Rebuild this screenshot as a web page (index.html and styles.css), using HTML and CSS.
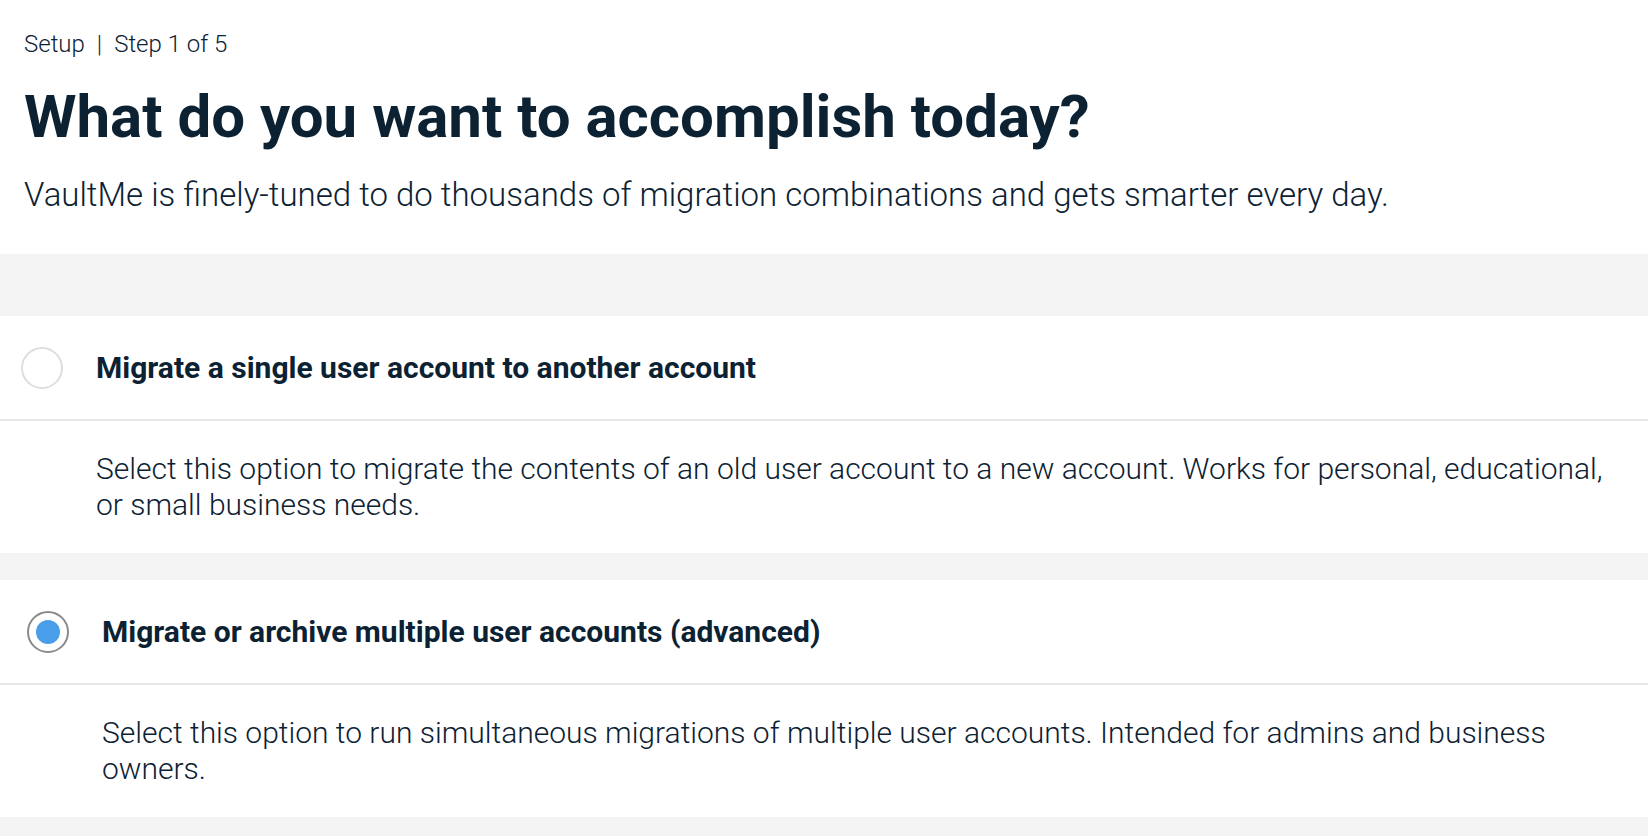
FILE: index.html
```html
<!DOCTYPE html>
<html lang="en">
<head>
<meta charset="utf-8">
<title>Setup - Step 1 of 5</title>
<link rel="stylesheet" href="styles.css">
</head>
<body>
  <header class="intro">
    <div class="crumbs"><span>Setup</span><span class="sep">|</span><span>Step 1 of 5</span></div>
    <h1 class="title">What do you want to accomplish today?</h1>
    <p class="lead">VaultMe is finely-tuned to do thousands of migration combinations and gets smarter every day.</p>
  </header>
  <main class="options">
    <section class="option">
      <div class="option-head">
        <span class="radio"></span>
        <h2 class="option-title">Migrate a single user account to another account</h2>
      </div>
      <p class="option-desc">Select this option to migrate the contents of an old user account to a new account. Works for personal, educational, or small business needs.</p>
    </section>
    <section class="option option--selected">
      <div class="option-head">
        <span class="radio radio--checked"></span>
        <h2 class="option-title">Migrate or archive multiple user accounts (advanced)</h2>
      </div>
      <p class="option-desc">Select this option to run simultaneous migrations of multiple user accounts. Intended for admins and business owners.</p>
    </section>
  </main>
</body>
</html>
```
FILE: styles.css
```css
* { box-sizing: border-box; }
html, body { margin: 0; padding: 0; }
body {
  font-family: Roboto, "Liberation Sans", sans-serif;
  color: #0c2233;
  background: #f4f4f4;
  height: 836px;
  overflow: hidden;
}
.intro {
  background: #ffffff;
  padding: 30px 24px 39px 24px;
}
.crumbs {
  font-size: 24px;
  line-height: 28px;
  font-weight: 300;
  display: flex;
  gap: 12px;
}
.title {
  margin: 24px 0 0 0;
  font-size: 60px;
  line-height: 70px;
  font-weight: 700;
}
.lead {
  margin: 23px 0 0 0;
  font-size: 33px;
  line-height: 40px;
  font-weight: 300;
}
.options {
  padding-top: 62px;
  display: flex;
  flex-direction: column;
  gap: 27px;
}
.option {
  background: #ffffff;
  padding-right: 40px;
}
.option-head {
  height: 105px;
  display: flex;
  align-items: center;
  gap: 33px;
  border-bottom: 2px solid #e8e8e8;
  padding-left: 21px;
  margin-right: -40px;
}
.option--selected .option-head { padding-left: 27px; }
.radio {
  width: 42px;
  height: 42px;
  border-radius: 50%;
  border: 2px solid #dedede;
  flex: none;
  display: flex;
  align-items: center;
  justify-content: center;
}
.radio--checked { border-color: #8a8a8a; }
.radio--checked::after {
  content: "";
  width: 24px;
  height: 24px;
  border-radius: 50%;
  background: #4a9de9;
}
.option-title {
  margin: 0;
  font-size: 30px;
  line-height: 36px;
  font-weight: 700;
}
.option-desc {
  margin: 0;
  padding: 30px 0 30px 96px;
  font-size: 30px;
  line-height: 36px;
  font-weight: 300;
}
.option--selected .option-desc { padding-left: 102px; }
```
